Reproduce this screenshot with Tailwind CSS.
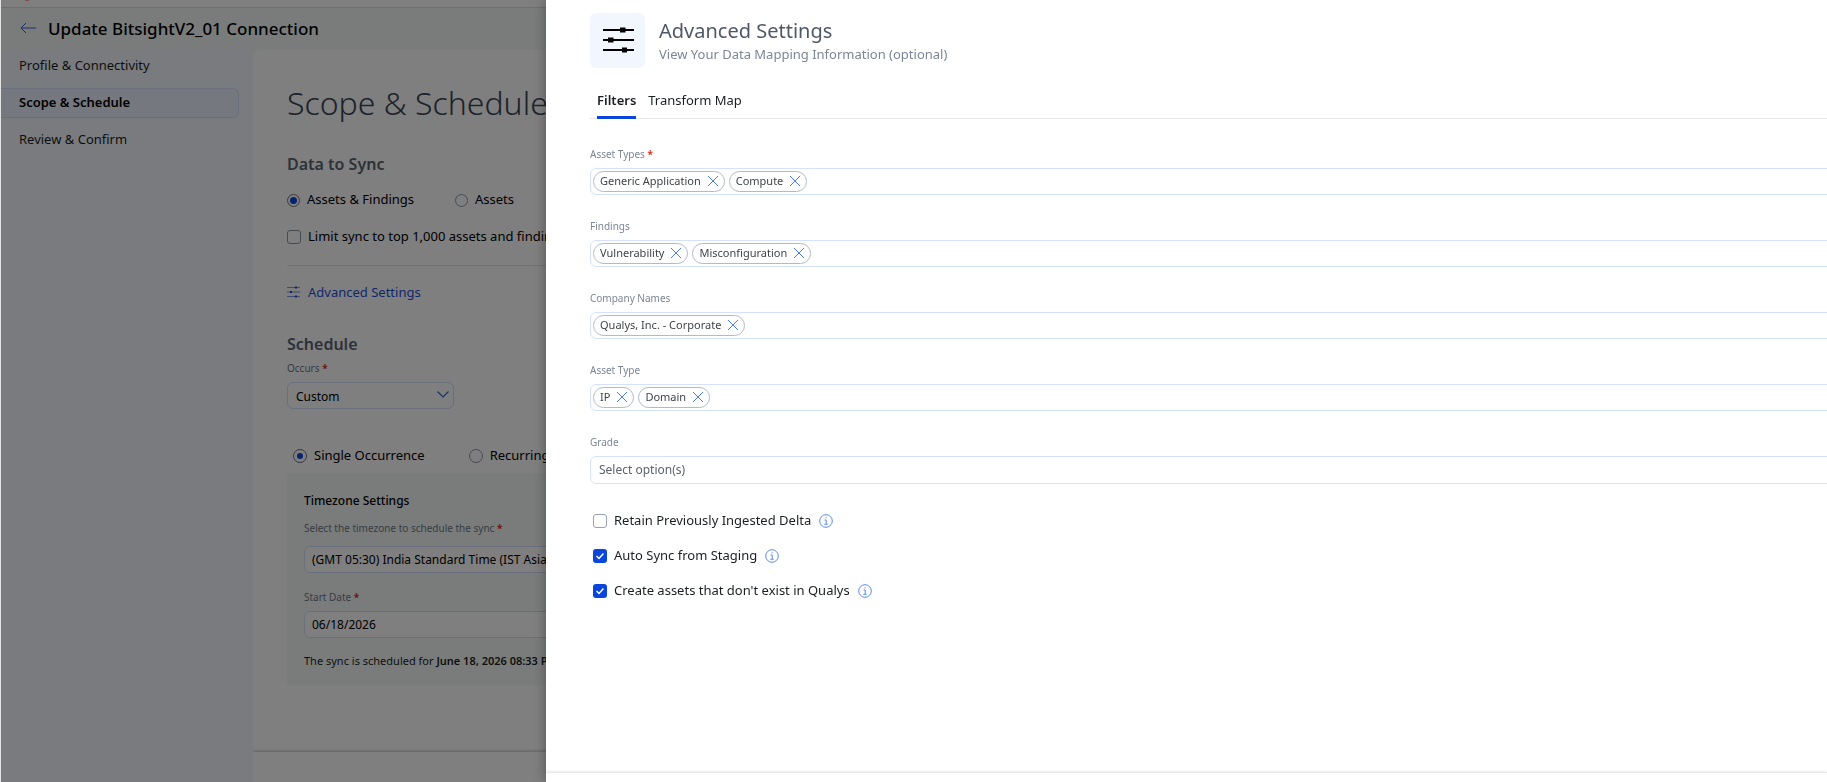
<!DOCTYPE html>
<html lang="en" class="h-full">
<head>
    <meta charset="UTF-8" />
    <meta name="viewport" content="width=device-width, initial-scale=1.0" />
    <title>Update BitsightV2_01 Connection</title>
    <script src="https://cdn.jsdelivr.net/npm/@tailwindcss/browser@4"></script>
</head>
<body class="h-full overflow-hidden bg-white font-['Noto_Sans',sans-serif] text-[13px] text-[#1b1f24]">

    <!-- Page -->
    <div class="flex h-screen flex-col overflow-hidden border-l border-[#e4e4e4]">
        <div class="h-2 shrink-0 border-b border-[#dcdedd] bg-white pl-6">
            <svg class="h-px w-1" viewBox="0 0 4 1"><rect width="4" height="1" fill="#ff9aa5" /></svg>
        </div>
        <header class="flex h-[42px] shrink-0 items-center gap-3 bg-[#f5f9f7] pl-[19px]">
            <a href="#" aria-label="Back">
                <svg class="mb-[2px] h-3 w-4" viewBox="0 0 16 12" fill="none" stroke="#2f62dc" stroke-width="1"><path d="M16 6H1M6 1L1 6l5 5" /></svg>
            </a>
            <h1 class="text-[17px] font-medium text-black">Update BitsightV2_01 Connection</h1>
        </header>

        <div class="flex min-h-0 flex-1 bg-[#f5f7fd]">
            <!-- Steps -->
            <nav class="flex w-[252px] shrink-0 flex-col gap-[7px] pt-px pr-[14px]">
                <a href="#" class="flex h-[30px] items-center pl-[18px]">Profile &amp; Connectivity</a>
                <a href="#" class="flex h-[30px] items-center rounded-r-md border border-l-0 border-[#d3defa] bg-[#ebf0fd] pl-[18px] font-semibold text-black">Scope &amp; Schedule</a>
                <a href="#" class="flex h-[30px] items-center pl-[18px]">Review &amp; Confirm</a>
            </nav>

            <div class="flex min-w-0 flex-1 flex-col overflow-hidden rounded-tl-lg bg-white">
                <main class="min-h-0 flex-1 overflow-hidden px-[34px] pt-[29px]">
                    <h2 class="text-[32px] leading-12 font-light text-[#3a4656]">Scope &amp; Schedule</h2>

                    <h3 class="mt-[25px] text-base font-semibold text-[#5b6470]">Data to Sync</h3>
                    <div class="mt-3 flex h-6 items-center gap-[41px] text-black">
                        <label class="flex items-center gap-[7px]">
                            <input type="radio" name="sync" checked class="size-[13px] appearance-none rounded-full border border-[#6b7688] bg-[#0a46dc] bg-clip-content p-[2px]" />Assets &amp; Findings
                        </label>
                        <label class="flex items-center gap-[7px]">
                            <input type="radio" name="sync" class="size-[13px] appearance-none rounded-full border border-[#8d96a5]" />Assets
                        </label>
                    </div>
                    <label class="mt-[13px] flex h-6 items-center gap-[7px] whitespace-nowrap text-black">
                        <input type="checkbox" class="size-[14px] shrink-0 appearance-none rounded-[3px] border border-[#8d96a5]" />Limit sync to top 1,000 assets and findings
                    </label>

                    <a href="#" class="mt-4 flex h-[37px] items-end gap-2 border-t border-[#dfe2e6] text-[#1f4fd8]">
                        <svg class="mb-1 h-3 w-[13px]" viewBox="0 0 13 12" stroke="currentColor"><path d="M0 1.500h13M0 6h13M0 10.500h13" stroke-width=".6" /><path d="M8 1.500h2M3 6h2M8 10.500h2" stroke-width="2.200" /></svg>
                        Advanced Settings
                    </a>

                    <h3 class="mt-[30px] text-base font-semibold text-[#5b6470]">Schedule</h3>
                    <label for="occurs" class="mt-1 block text-[10px] leading-4 text-[#6f7987]">Occurs <span class="font-bold text-[#d93025]">*</span></label>
                    <div class="relative mt-[6px] w-[167px]">
                        <select id="occurs" class="h-[27px] w-full appearance-none rounded-md border border-[#d3defa] px-2 pt-[2px] text-xs text-black">
                            <option>Custom</option>
                        </select>
                        <svg class="pointer-events-none absolute top-[9px] right-[5px] h-[7px] w-3" viewBox="0 0 12 7" fill="none" stroke="#2f62dc" stroke-width="1.2"><path d="M.5.5L6 6l5.500-5.500" /></svg>
                    </div>

                    <div class="mt-[35px] flex h-6 items-center gap-11 pl-[6px] text-black">
                        <label class="flex items-center gap-[7px]">
                            <input type="radio" name="occurrence" checked class="size-[14px] appearance-none rounded-full border border-[#6b7688] bg-[#0a46dc] bg-clip-content p-[3px]" />Single Occurrence
                        </label>
                        <label class="flex items-center gap-[7px]">
                            <input type="radio" name="occurrence" class="size-[14px] appearance-none rounded-full border border-[#8d96a5]" />Recurring
                        </label>
                    </div>

                    <section class="mt-[5px] bg-[#f5f9f7] px-[17px] pt-5 pb-4">
                        <h4 class="text-xs font-medium text-black">Timezone Settings</h4>
                        <label for="timezone" class="mt-[11px] block text-[10px] leading-4 text-[#6f7987]">Select the timezone to schedule the sync <span class="font-bold text-[#d93025]">*</span></label>
                        <input id="timezone" type="text" value="(GMT 05:30) India Standard Time (IST Asia/Kolkata)" class="mt-[10px] block h-[27px] w-full rounded-md border border-[#d3defa] bg-white px-[7px] text-xs text-black" />
                        <label for="start" class="mt-4 block text-[10px] leading-4 text-[#6f7987]">Start Date <span class="font-bold text-[#d93025]">*</span></label>
                        <input id="start" type="text" value="06/18/2026" class="mt-[6px] block h-[27px] w-full rounded-md border border-[#d3defa] bg-white px-[7px] text-xs text-black" />
                        <p class="mt-[15px] text-[11px] leading-4 whitespace-nowrap">The sync is scheduled for <b class="font-semibold">June 18, 2026 08:33 PM</b></p>
                    </section>
                </main>
                <footer class="h-[30px] shrink-0 bg-white shadow-[0_-1px_3px_rgba(0,0,0,0.25)]"></footer>
            </div>
        </div>
    </div>

    <!-- Backdrop -->
    <div class="fixed inset-y-0 right-0 left-px bg-black/50"></div>

    <!-- Drawer -->
    <aside class="fixed inset-y-0 right-0 left-[546px] flex flex-col overflow-hidden bg-white shadow-[0_0_12px_rgba(0,0,0,0.35)]">
        <div class="min-h-0 flex-1 pt-[13px] pl-11">
            <div class="flex items-center gap-[14px]">
                <div class="flex size-[55px] items-center justify-center rounded-md bg-[#f2f7ff] pl-[2px]">
                    <svg class="mb-[2px] h-[26px] w-[31px]" viewBox="0 0 31 26" stroke="#000"><path d="M0 3h31M0 13h31M0 23h31" stroke-width="2" /><path d="M17 3h5.500M5 13h5.500M19 23h5" stroke-width="5" /></svg>
                </div>
                <div class="pt-[2px]">
                    <h2 class="text-xl leading-6 text-[#4f5868]">Advanced Settings</h2>
                    <p class="leading-[22px] text-[#7b8697]">View Your Data Mapping Information (optional)</p>
                </div>
            </div>

            <div role="tablist" class="mt-[22px] flex h-[29px] gap-3 border-b border-[#e5e7ea] pl-[7px]">
                <button role="tab" aria-selected="true" class="-mb-px border-b-3 border-[#0a46dc] pb-1 font-semibold">Filters</button>
                <button role="tab" class="pb-[6px]">Transform Map</button>
            </div>

            <form class="mt-[27px] flex flex-col gap-[23px]">
                <div>
                    <label for="assetTypes" class="block text-[10px] leading-4 text-[#7b8697]">Asset Types <span class="font-bold text-[#e0301e]">*</span></label>
                    <div class="mt-[6px] -mr-2 flex h-[27px] items-center gap-1 rounded-md border border-[#d5e2ff] px-[2px]">
                        <span class="flex h-[21px] items-center gap-[7px] rounded-full border border-[#b1bac8] px-[6px] text-[11px] text-[#3f444b]">Generic Application<button type="button" aria-label="Remove Generic Application"><svg class="mb-[2px] size-[10px]" viewBox="0 0 10 10" stroke="#4a7cf0"><path d="M0 0l10 10M10 0L0 10" /></svg></button></span>
                        <span class="flex h-[21px] items-center gap-[7px] rounded-full border border-[#b1bac8] px-[6px] text-[11px] text-[#3f444b]">Compute<button type="button" aria-label="Remove Compute"><svg class="mb-[2px] size-[10px]" viewBox="0 0 10 10" stroke="#4a7cf0"><path d="M0 0l10 10M10 0L0 10" /></svg></button></span>
                        <input id="assetTypes" type="text" class="min-w-0 flex-1" />
                    </div>
                </div>
                <div>
                    <label for="findings" class="block text-[10px] leading-4 text-[#7b8697]">Findings</label>
                    <div class="mt-[6px] -mr-2 flex h-[27px] items-center gap-1 rounded-md border border-[#d5e2ff] px-[2px]">
                        <span class="flex h-[21px] items-center gap-[7px] rounded-full border border-[#b1bac8] px-[6px] text-[11px] text-[#3f444b]">Vulnerability<button type="button" aria-label="Remove Vulnerability"><svg class="mb-[2px] size-[10px]" viewBox="0 0 10 10" stroke="#4a7cf0"><path d="M0 0l10 10M10 0L0 10" /></svg></button></span>
                        <span class="flex h-[21px] items-center gap-[7px] rounded-full border border-[#b1bac8] px-[6px] text-[11px] text-[#3f444b]">Misconfiguration<button type="button" aria-label="Remove Misconfiguration"><svg class="mb-[2px] size-[10px]" viewBox="0 0 10 10" stroke="#4a7cf0"><path d="M0 0l10 10M10 0L0 10" /></svg></button></span>
                        <input id="findings" type="text" class="min-w-0 flex-1" />
                    </div>
                </div>
                <div>
                    <label for="companies" class="block text-[10px] leading-4 text-[#7b8697]">Company Names</label>
                    <div class="mt-[6px] -mr-2 flex h-[27px] items-center gap-1 rounded-md border border-[#d5e2ff] px-[2px]">
                        <span class="flex h-[21px] items-center gap-[7px] rounded-full border border-[#b1bac8] px-[6px] text-[11px] text-[#3f444b]">Qualys, Inc. - Corporate<button type="button" aria-label="Remove Qualys, Inc. - Corporate"><svg class="mb-[2px] size-[10px]" viewBox="0 0 10 10" stroke="#4a7cf0"><path d="M0 0l10 10M10 0L0 10" /></svg></button></span>
                        <input id="companies" type="text" class="min-w-0 flex-1" />
                    </div>
                </div>
                <div>
                    <label for="assetType" class="block text-[10px] leading-4 text-[#7b8697]">Asset Type</label>
                    <div class="mt-[6px] -mr-2 flex h-[27px] items-center gap-1 rounded-md border border-[#d5e2ff] px-[2px]">
                        <span class="flex h-[21px] items-center gap-[7px] rounded-full border border-[#b1bac8] px-[6px] text-[11px] text-[#3f444b]">IP<button type="button" aria-label="Remove IP"><svg class="mb-[2px] size-[10px]" viewBox="0 0 10 10" stroke="#4a7cf0"><path d="M0 0l10 10M10 0L0 10" /></svg></button></span>
                        <span class="flex h-[21px] items-center gap-[7px] rounded-full border border-[#b1bac8] px-[6px] text-[11px] text-[#3f444b]">Domain<button type="button" aria-label="Remove Domain"><svg class="mb-[2px] size-[10px]" viewBox="0 0 10 10" stroke="#4a7cf0"><path d="M0 0l10 10M10 0L0 10" /></svg></button></span>
                        <input id="assetType" type="text" class="min-w-0 flex-1" />
                    </div>
                </div>
                <div>
                    <label for="grade" class="block text-[10px] leading-4 text-[#7b8697]">Grade</label>
                    <div class="mt-[6px] -mr-2 flex h-7 rounded-md border border-[#d5e2ff]">
                        <input id="grade" type="text" placeholder="Select option(s)" class="min-w-0 flex-1 px-2 text-xs placeholder:text-[#5c6470]" />
                    </div>
                </div>

                <!-- Options -->
                <div class="mt-[2px] flex flex-col gap-[11px] pl-[3px]">
                    <div class="flex h-6 items-center gap-2">
                        <label class="relative flex items-center gap-[7px]">
                            <input type="checkbox" class="size-[14px] appearance-none rounded-[3px] border border-[#98a2b3]" />Retain Previously Ingested Delta
                        </label>
                        <svg class="size-[14px]" viewBox="0 0 14 14" fill="none" stroke="#4a7cf0"><circle cx="7" cy="7" r="6.300" stroke-width=".9" /><path d="M5.500 6h1.700v4M5.300 10.300h3.400M6.400 3.800h1.200" stroke-width=".9" /></svg>
                    </div>
                    <div class="flex h-6 items-center gap-2">
                        <label class="relative flex items-center gap-[7px]">
                            <input type="checkbox" checked class="size-[14px] appearance-none rounded-[3px] bg-[#0a46dc]" />
                            <svg class="pointer-events-none absolute left-[3px] h-2 w-2" viewBox="0 0 8 8" fill="none" stroke="#fff" stroke-width="1.500"><path d="M.5 4L3 6.500l4.500-5" /></svg>Auto Sync from Staging
                        </label>
                        <svg class="size-[14px]" viewBox="0 0 14 14" fill="none" stroke="#4a7cf0"><circle cx="7" cy="7" r="6.300" stroke-width=".9" /><path d="M5.500 6h1.700v4M5.300 10.300h3.400M6.400 3.800h1.200" stroke-width=".9" /></svg>
                    </div>
                    <div class="flex h-6 items-center gap-2">
                        <label class="relative flex items-center gap-[7px]">
                            <input type="checkbox" checked class="size-[14px] appearance-none rounded-[3px] bg-[#0a46dc]" />
                            <svg class="pointer-events-none absolute left-[3px] h-2 w-2" viewBox="0 0 8 8" fill="none" stroke="#fff" stroke-width="1.500"><path d="M.5 4L3 6.500l4.500-5" /></svg>Create assets that don't exist in Qualys
                        </label>
                        <svg class="size-[14px]" viewBox="0 0 14 14" fill="none" stroke="#4a7cf0"><circle cx="7" cy="7" r="6.300" stroke-width=".9" /><path d="M5.500 6h1.700v4M5.300 10.300h3.400M6.400 3.800h1.200" stroke-width=".9" /></svg>
                    </div>
                </div>
            </form>
        </div>
        <footer class="h-[9px] shrink-0 bg-white shadow-[0_-1px_3px_rgba(0,0,0,0.15)]"></footer>
    </aside>

</body>
</html>
